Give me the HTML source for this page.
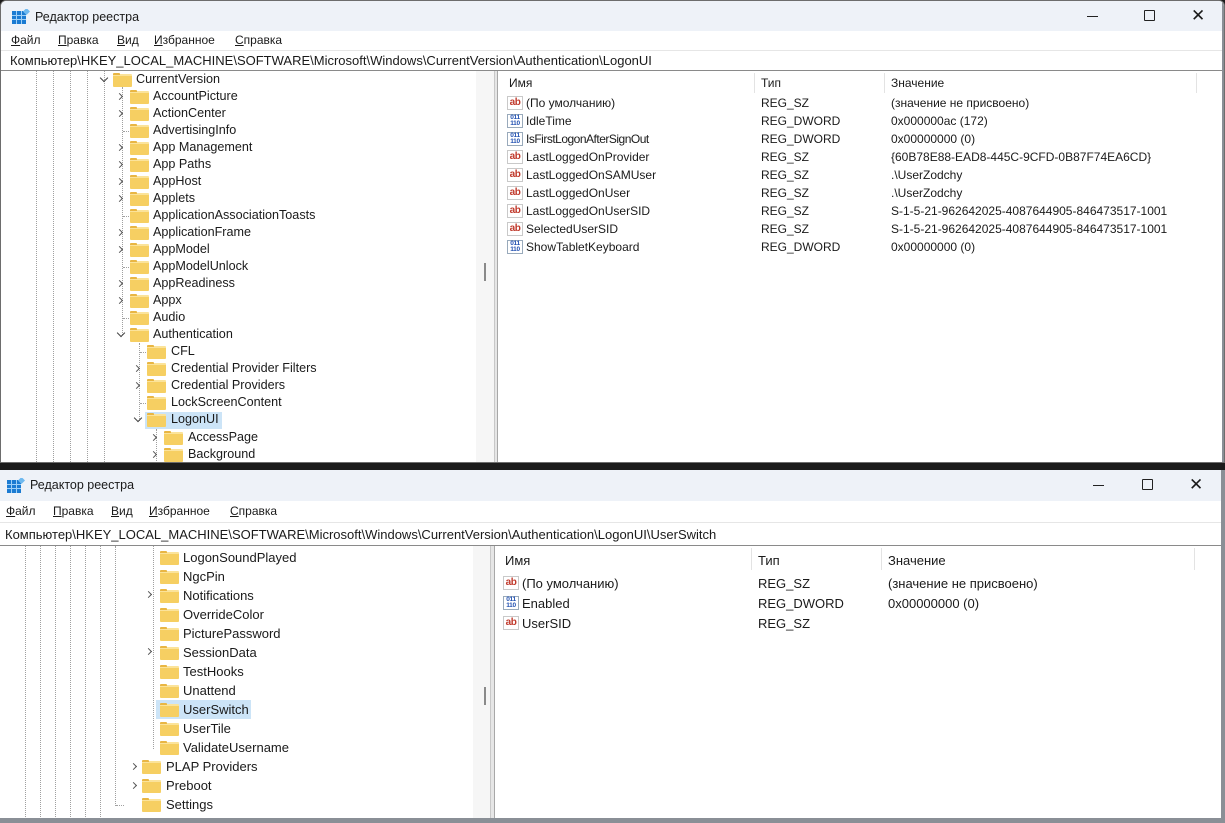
<!DOCTYPE html>
<html><head><meta charset="utf-8">
<style>
*{margin:0;padding:0;box-sizing:border-box}
body{width:1225px;height:823px;background:#1b1b1b;position:relative;overflow:hidden;font-family:"Liberation Sans","DejaVu Sans",sans-serif;color:#1a1a1a}
.a{position:absolute}
.tx{position:absolute;white-space:nowrap;font-size:12px;line-height:17px}
.tr .tx{font-size:12.6px}
.b .tx{font-size:13px;line-height:19px}
.fd{position:absolute;width:19px;height:13px;background:#f6cf62;border-radius:1px;border-top:2px solid #fbe39a;margin-top:1px}
.fd:before{content:"";position:absolute;left:0;top:-3px;width:7px;height:2px;background:#e9b643;border-radius:1px 1px 0 0}
.cr{position:absolute;width:5px;height:5px;border-right:1.3px solid #555;border-bottom:1.3px solid #555;transform:rotate(-45deg)}
.cd{position:absolute;width:6px;height:6px;border-right:1.3px solid #444;border-bottom:1.3px solid #444;transform:rotate(45deg)}
.g{position:absolute;width:0;border-left:1px dotted #a0a0a0}
.h{position:absolute;height:0;border-top:1px dotted #a0a0a0}
.ab{position:absolute;width:16px;height:14px;border:1px solid #c9c9c9;background:#fff;color:#c0392b;font-size:10px;font-weight:bold;line-height:11px;text-align:center;letter-spacing:-0.5px}
.dw{position:absolute;width:16px;height:14px;border:1px solid #9ab;background:#fff;color:#1f4fb0;font-size:6.5px;font-weight:bold;line-height:6px;text-align:center;letter-spacing:-0.3px}
.sel{position:absolute;background:#cce4f7}
.win{position:absolute;left:0;width:1225px;background:#fff;overflow:hidden}
.title{position:absolute;left:0;width:1225px;background:#eef2f8}
.u{text-decoration:underline}
</style></head><body>

<!-- TOP WINDOW -->
<div class="win" style="top:0;height:463px;border:1px solid #6d6d6d;border-radius:6px 6px 0 0">
 <div class="title" style="top:0;height:30px"></div>
 <svg class="a" style="left:11px;top:8px" width="18" height="16" viewBox="0 0 18 16"><rect x="0" y="2" width="14" height="13" fill="#1b7bd2"/><g stroke="#9fd0f7" stroke-width="1"><line x1="0" y1="6.5" x2="14" y2="6.5"/><line x1="0" y1="10.5" x2="14" y2="10.5"/><line x1="4.5" y1="2" x2="4.5" y2="15"/><line x1="9.5" y1="2" x2="9.5" y2="15"/></g><rect x="12" y="0" width="5" height="5" fill="#6fb9ef" transform="rotate(45 14.5 2.5)"/></svg>
 <div class="tx" style="left:34px;top:8px;font-size:12.5px">Редактор реестра</div>
 <div class="a" style="left:1086px;top:15px;width:11px;border-top:1px solid #222"></div>
 <div class="a" style="left:1143px;top:9px;width:11px;height:11px;border:1px solid #222;border-radius:1px"></div>
 <div class="tx" style="left:1190px;top:5px;font-size:17px;line-height:20px">✕</div>
 <div class="tx" style="left:10px;top:31px"><span class="u">Ф</span>айл</div>
 <div class="tx" style="left:57px;top:31px"><span class="u">П</span>равка</div>
 <div class="tx" style="left:116px;top:31px"><span class="u">В</span>ид</div>
 <div class="tx" style="left:153px;top:31px"><span class="u">И</span>збранное</div>
 <div class="tx" style="left:234px;top:31px"><span class="u">С</span>правка</div>
 <div class="a" style="left:0;top:49px;width:1225px;border-top:1px solid #e6e6e6"></div>
 <div class="tx" style="left:9px;top:51px;font-size:13px">Компьютер\HKEY_LOCAL_MACHINE\SOFTWARE\Microsoft\Windows\CurrentVersion\Authentication\LogonUI</div>
 <div class="a" style="left:0;top:69px;width:1225px;border-top:1px solid #8a8a8a"></div>
 <div class="tr">
 <div class="g" style="left:35px;top:70px;height:395px"></div>
 <div class="g" style="left:52px;top:70px;height:395px"></div>
 <div class="g" style="left:69px;top:70px;height:395px"></div>
 <div class="g" style="left:86px;top:70px;height:395px"></div>
 <div class="g" style="left:103px;top:70px;height:395px"></div>
 <div class="g" style="left:121px;top:86px;height:248px"></div>
 <div class="g" style="left:138px;top:342px;height:78px"></div>
 <div class="g" style="left:155px;top:428px;height:40px"></div>
 <div class="h" style="left:122px;top:130px;width:6px"></div>
 <div class="h" style="left:122px;top:215px;width:6px"></div>
 <div class="h" style="left:122px;top:266px;width:6px"></div>
 <div class="h" style="left:122px;top:317px;width:6px"></div>
 <div class="h" style="left:139px;top:351px;width:6px"></div>
 <div class="h" style="left:139px;top:402px;width:6px"></div>

 <div class="cd" style="left:100px;top:74px"></div><div class="fd" style="left:112px;top:72px"></div><div class="tx" style="left:135px;top:70px">CurrentVersion</div>

 <div class="cr" style="left:116px;top:93px"></div><div class="fd" style="left:129px;top:89px"></div><div class="tx" style="left:152px;top:87px">AccountPicture</div>
 <div class="cr" style="left:116px;top:110px"></div><div class="fd" style="left:129px;top:106px"></div><div class="tx" style="left:152px;top:104px">ActionCenter</div>
 <div class="fd" style="left:129px;top:123px"></div><div class="tx" style="left:152px;top:121px">AdvertisingInfo</div>
 <div class="cr" style="left:116px;top:144px"></div><div class="fd" style="left:129px;top:140px"></div><div class="tx" style="left:152px;top:138px">App Management</div>
 <div class="cr" style="left:116px;top:161px"></div><div class="fd" style="left:129px;top:157px"></div><div class="tx" style="left:152px;top:155px">App Paths</div>
 <div class="cr" style="left:116px;top:178px"></div><div class="fd" style="left:129px;top:174px"></div><div class="tx" style="left:152px;top:172px">AppHost</div>
 <div class="cr" style="left:116px;top:195px"></div><div class="fd" style="left:129px;top:191px"></div><div class="tx" style="left:152px;top:189px">Applets</div>
 <div class="fd" style="left:129px;top:208px"></div><div class="tx" style="left:152px;top:206px">ApplicationAssociationToasts</div>
 <div class="cr" style="left:116px;top:229px"></div><div class="fd" style="left:129px;top:225px"></div><div class="tx" style="left:152px;top:223px">ApplicationFrame</div>
 <div class="cr" style="left:116px;top:246px"></div><div class="fd" style="left:129px;top:242px"></div><div class="tx" style="left:152px;top:240px">AppModel</div>
 <div class="fd" style="left:129px;top:259px"></div><div class="tx" style="left:152px;top:257px">AppModelUnlock</div>
 <div class="cr" style="left:116px;top:280px"></div><div class="fd" style="left:129px;top:276px"></div><div class="tx" style="left:152px;top:274px">AppReadiness</div>
 <div class="cr" style="left:116px;top:297px"></div><div class="fd" style="left:129px;top:293px"></div><div class="tx" style="left:152px;top:291px">Appx</div>
 <div class="fd" style="left:129px;top:310px"></div><div class="tx" style="left:152px;top:308px">Audio</div>
 <div class="cd" style="left:117px;top:329px"></div><div class="fd" style="left:129px;top:327px"></div><div class="tx" style="left:152px;top:325px">Authentication</div>

 <div class="fd" style="left:146px;top:344px"></div><div class="tx" style="left:170px;top:342px">CFL</div>
 <div class="cr" style="left:133px;top:365px"></div><div class="fd" style="left:146px;top:361px"></div><div class="tx" style="left:170px;top:359px">Credential Provider Filters</div>
 <div class="cr" style="left:133px;top:382px"></div><div class="fd" style="left:146px;top:378px"></div><div class="tx" style="left:170px;top:376px">Credential Providers</div>
 <div class="fd" style="left:146px;top:395px"></div><div class="tx" style="left:170px;top:393px">LockScreenContent</div>
 <div class="sel" style="left:144px;top:411px;width:77px;height:17px"></div>
 <div class="cd" style="left:134px;top:414px"></div><div class="fd" style="left:146px;top:412px"></div><div class="tx" style="left:170px;top:410px">LogonUI</div>

 <div class="cr" style="left:150px;top:434px"></div><div class="fd" style="left:163px;top:430px"></div><div class="tx" style="left:187px;top:428px">AccessPage</div>
 <div class="cr" style="left:150px;top:451px"></div><div class="fd" style="left:163px;top:447px"></div><div class="tx" style="left:187px;top:445px">Background</div>
 </div>

 <div class="a" style="left:475px;top:70px;width:18px;height:395px;background:#f6f6f6"></div>
 <div class="a" style="left:483px;top:262px;width:2px;height:18px;background:#8a8a8a"></div>
 <div class="a" style="left:493px;top:70px;width:4px;height:395px;background:#e6e6e6;border-left:1px solid #c8c8c8;border-right:1px solid #a8a8a8"></div>

 <div class="a" style="left:753px;top:72px;height:20px;border-left:1px solid #e3e3e3"></div>
 <div class="a" style="left:883px;top:72px;height:20px;border-left:1px solid #e3e3e3"></div>
 <div class="a" style="left:1195px;top:72px;height:20px;border-left:1px solid #e3e3e3"></div>
 <div class="tx" style="left:508px;top:74px">Имя</div><div class="tx" style="left:760px;top:74px">Тип</div><div class="tx" style="left:890px;top:74px">Значение</div>

 <div class="ab" style="left:506px;top:95px">ab</div><div class="tx" style="left:525px;top:94px">(По умолчанию)</div><div class="tx" style="left:760px;top:94px">REG_SZ</div><div class="tx" style="left:890px;top:94px">(значение не присвоено)</div>
 <div class="dw" style="left:506px;top:113px">011<br>110</div><div class="tx" style="left:525px;top:112px">IdleTime</div><div class="tx" style="left:760px;top:112px">REG_DWORD</div><div class="tx" style="left:890px;top:112px">0x000000ac (172)</div>
 <div class="dw" style="left:506px;top:131px">011<br>110</div><div class="tx" style="left:525px;top:130px;letter-spacing:-0.5px">IsFirstLogonAfterSignOut</div><div class="tx" style="left:760px;top:130px">REG_DWORD</div><div class="tx" style="left:890px;top:130px">0x00000000 (0)</div>
 <div class="ab" style="left:506px;top:149px">ab</div><div class="tx" style="left:525px;top:148px">LastLoggedOnProvider</div><div class="tx" style="left:760px;top:148px">REG_SZ</div><div class="tx" style="left:890px;top:148px">{60B78E88-EAD8-445C-9CFD-0B87F74EA6CD}</div>
 <div class="ab" style="left:506px;top:167px">ab</div><div class="tx" style="left:525px;top:166px">LastLoggedOnSAMUser</div><div class="tx" style="left:760px;top:166px">REG_SZ</div><div class="tx" style="left:890px;top:166px">.\UserZodchy</div>
 <div class="ab" style="left:506px;top:185px">ab</div><div class="tx" style="left:525px;top:184px">LastLoggedOnUser</div><div class="tx" style="left:760px;top:184px">REG_SZ</div><div class="tx" style="left:890px;top:184px">.\UserZodchy</div>
 <div class="ab" style="left:506px;top:203px">ab</div><div class="tx" style="left:525px;top:202px">LastLoggedOnUserSID</div><div class="tx" style="left:760px;top:202px">REG_SZ</div><div class="tx" style="left:890px;top:202px">S-1-5-21-962642025-4087644905-846473517-1001</div>
 <div class="ab" style="left:506px;top:221px">ab</div><div class="tx" style="left:525px;top:220px">SelectedUserSID</div><div class="tx" style="left:760px;top:220px">REG_SZ</div><div class="tx" style="left:890px;top:220px">S-1-5-21-962642025-4087644905-846473517-1001</div>
 <div class="dw" style="left:506px;top:239px">011<br>110</div><div class="tx" style="left:525px;top:238px">ShowTabletKeyboard</div><div class="tx" style="left:760px;top:238px">REG_DWORD</div><div class="tx" style="left:890px;top:238px">0x00000000 (0)</div>
 <div class="a" style="left:1221px;top:0;width:4px;height:463px;background:#8a8f96"></div>
</div>

<!-- BOTTOM WINDOW -->
<div class="win b" style="top:470px;height:353px">
 <div class="title" style="top:0;height:31px"></div>
 <svg class="a" style="left:7px;top:8px" width="18" height="16" viewBox="0 0 18 16"><rect x="0" y="2" width="14" height="13" fill="#1b7bd2"/><g stroke="#9fd0f7" stroke-width="1"><line x1="0" y1="6.5" x2="14" y2="6.5"/><line x1="0" y1="10.5" x2="14" y2="10.5"/><line x1="4.5" y1="2" x2="4.5" y2="15"/><line x1="9.5" y1="2" x2="9.5" y2="15"/></g><rect x="12" y="0" width="5" height="5" fill="#6fb9ef" transform="rotate(45 14.5 2.5)"/></svg>
 <div class="tx" style="left:30px;top:7px;font-size:12.5px;line-height:17px">Редактор реестра</div>
 <div class="a" style="left:1093px;top:15px;width:11px;border-top:1px solid #222"></div>
 <div class="a" style="left:1142px;top:9px;width:11px;height:11px;border:1px solid #222;border-radius:1px"></div>
 <div class="tx" style="left:1189px;top:5px;font-size:17px;line-height:20px">✕</div>
 <div class="tx" style="left:6px;top:33px;font-size:12px;line-height:17px"><span class="u">Ф</span>айл</div>
 <div class="tx" style="left:53px;top:33px;font-size:12px;line-height:17px"><span class="u">П</span>равка</div>
 <div class="tx" style="left:111px;top:33px;font-size:12px;line-height:17px"><span class="u">В</span>ид</div>
 <div class="tx" style="left:149px;top:33px;font-size:12px;line-height:17px"><span class="u">И</span>збранное</div>
 <div class="tx" style="left:230px;top:33px;font-size:12px;line-height:17px"><span class="u">С</span>правка</div>
 <div class="a" style="left:0;top:52px;width:1225px;border-top:1px solid #e6e6e6"></div>
 <div class="tx" style="left:5px;top:56px;font-size:13px;line-height:17px">Компьютер\HKEY_LOCAL_MACHINE\SOFTWARE\Microsoft\Windows\CurrentVersion\Authentication\LogonUI\UserSwitch</div>
 <div class="a" style="left:0;top:75px;width:1225px;border-top:1px solid #8a8a8a"></div>

 <div class="g" style="left:25px;top:76px;height:275px"></div>
 <div class="g" style="left:40px;top:76px;height:275px"></div>
 <div class="g" style="left:55px;top:76px;height:275px"></div>
 <div class="g" style="left:70px;top:76px;height:275px"></div>
 <div class="g" style="left:85px;top:76px;height:275px"></div>
 <div class="g" style="left:100px;top:76px;height:275px"></div>
 <div class="g" style="left:115px;top:76px;height:260px"></div>
 <div class="g" style="left:153px;top:76px;height:203px"></div>
 <div class="h" style="left:116px;top:335px;width:8px"></div>

 <div class="fd" style="left:160px;top:81px"></div><div class="tx" style="left:183px;top:78px">LogonSoundPlayed</div>
 <div class="fd" style="left:160px;top:100px"></div><div class="tx" style="left:183px;top:97px">NgcPin</div>
 <div class="cr" style="left:146px;top:122px"></div><div class="fd" style="left:160px;top:119px"></div><div class="tx" style="left:183px;top:116px">Notifications</div>
 <div class="fd" style="left:160px;top:138px"></div><div class="tx" style="left:183px;top:135px">OverrideColor</div>
 <div class="fd" style="left:160px;top:157px"></div><div class="tx" style="left:183px;top:154px">PicturePassword</div>
 <div class="cr" style="left:146px;top:179px"></div><div class="fd" style="left:160px;top:176px"></div><div class="tx" style="left:183px;top:173px">SessionData</div>
 <div class="fd" style="left:160px;top:195px"></div><div class="tx" style="left:183px;top:192px">TestHooks</div>
 <div class="fd" style="left:160px;top:214px"></div><div class="tx" style="left:183px;top:211px">Unattend</div>
 <div class="sel" style="top:230px;height:19px;left:156px;width:95px"></div>
 <div class="fd" style="left:160px;top:233px"></div><div class="tx" style="left:183px;top:230px">UserSwitch</div>
 <div class="fd" style="left:160px;top:252px"></div><div class="tx" style="left:183px;top:249px">UserTile</div>
 <div class="fd" style="left:160px;top:271px"></div><div class="tx" style="left:183px;top:268px">ValidateUsername</div>
 <div class="cr" style="left:131px;top:294px"></div><div class="fd" style="left:142px;top:290px"></div><div class="tx" style="left:166px;top:287px">PLAP Providers</div>
 <div class="cr" style="left:131px;top:313px"></div><div class="fd" style="left:142px;top:309px"></div><div class="tx" style="left:166px;top:306px">Preboot</div>
 <div class="fd" style="left:142px;top:328px"></div><div class="tx" style="left:166px;top:325px">Settings</div>

 <div class="a" style="left:473px;top:76px;width:17px;height:275px;background:#f6f6f6"></div>
 <div class="a" style="left:484px;top:217px;width:2px;height:18px;background:#8a8a8a"></div>
 <div class="a" style="left:490px;top:76px;width:5px;height:275px;background:#e6e6e6;border-left:1px solid #c8c8c8;border-right:1px solid #a8a8a8"></div>

 <div class="a" style="left:751px;top:78px;height:22px;border-left:1px solid #e3e3e3"></div>
 <div class="a" style="left:881px;top:78px;height:22px;border-left:1px solid #e3e3e3"></div>
 <div class="a" style="left:1194px;top:78px;height:22px;border-left:1px solid #e3e3e3"></div>
 <div class="tx" style="left:505px;top:81px">Имя</div><div class="tx" style="left:758px;top:81px">Тип</div><div class="tx" style="left:888px;top:81px">Значение</div>
 <div class="ab" style="left:503px;top:106px">ab</div><div class="tx" style="left:522px;top:104px">(По умолчанию)</div><div class="tx" style="left:758px;top:104px">REG_SZ</div><div class="tx" style="left:888px;top:104px">(значение не присвоено)</div>
 <div class="dw" style="left:503px;top:126px">011<br>110</div><div class="tx" style="left:522px;top:124px">Enabled</div><div class="tx" style="left:758px;top:124px">REG_DWORD</div><div class="tx" style="left:888px;top:124px">0x00000000 (0)</div>
 <div class="ab" style="left:503px;top:146px">ab</div><div class="tx" style="left:522px;top:144px">UserSID</div><div class="tx" style="left:758px;top:144px">REG_SZ</div>

 <div class="a" style="left:0;top:348px;width:1225px;height:5px;background:#8a8f96"></div>
 <div class="a" style="left:1221px;top:0;width:4px;height:353px;background:#8a8f96"></div>
</div>
</body></html>
